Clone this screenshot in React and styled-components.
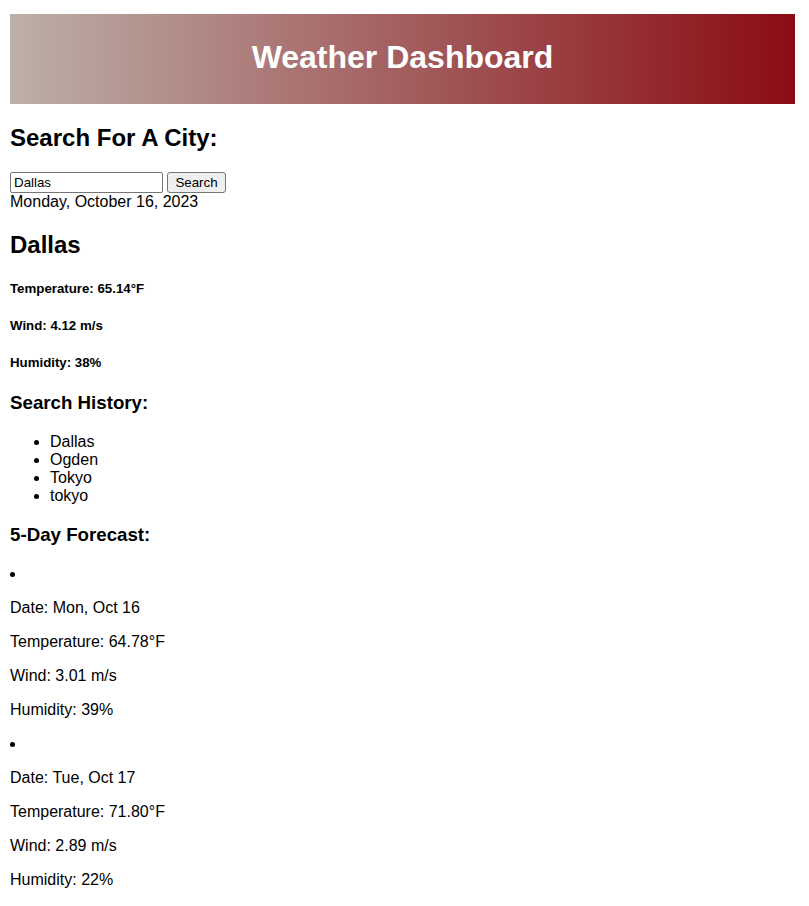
import React from "react";
import styled, { createGlobalStyle } from "styled-components";

const GlobalStyle = createGlobalStyle`
  body {
    margin: 14px 14px 0 10px;
    font-family: "Liberation Sans", Arial, sans-serif;
    font-size: 16px;
    color: #000;
    background: #fff;
  }
`;

const Header = styled.header`
  height: 90px;
  box-sizing: border-box;
  padding-bottom: 4px;
  display: flex;
  align-items: center;
  justify-content: center;
  background: linear-gradient(to right, #bcb0a9, #8a0c14);
`;

const Title = styled.h1`
  margin: 0;
  color: #fff;
  font-size: 32px;
  font-weight: 700;
`;

const SectionTitle = styled.h2`
  font-size: 24px;
  font-weight: 700;
  margin: 19.92px 0;
`;

const SearchRow = styled.div`
  display: flex;
  align-items: center;
  gap: 4px;
`;

const CityInput = styled.input`
  box-sizing: border-box;
  width: 153px;
  height: 21px;
  padding: 1px 3px;
  font-family: "Liberation Sans", Arial, sans-serif;
  font-size: 13.33px;
  border: 1px solid #767676;
  border-radius: 2px;
  outline: none;
`;

const SearchButton = styled.button`
  box-sizing: border-box;
  width: 59px;
  height: 21px;
  padding: 1px 6px;
  font-family: "Liberation Sans", Arial, sans-serif;
  font-size: 13.33px;
  background: #efefef;
  border: 1px solid #767676;
  border-radius: 3px;
  color: #000;
`;

const DateText = styled.div`
  line-height: 18px;
`;

const Stat = styled.h5`
  font-size: 13.28px;
  font-weight: 700;
  margin: 22.18px 0;
`;

const SubTitle = styled.h3`
  font-size: 18.72px;
  font-weight: 700;
  margin: 18.72px 0;
`;

const HistoryList = styled.ul`
  margin: 16px 0;
  padding-left: 40px;
  line-height: 18px;
`;

const ForecastList = styled.ul`
  margin: 0;
  padding: 0;
`;

const ForecastItem = styled.li`
  list-style: disc inside;
  line-height: 18px;
`;

const ForecastLine = styled.p`
  margin: 16px 0;
  line-height: 18px;
`;

const history = ["Dallas", "Ogden", "Tokyo", "tokyo"];

const forecast = [
  { date: "Mon, Oct 16", temp: "64.78", wind: "3.01", humidity: "39" },
  { date: "Tue, Oct 17", temp: "71.80", wind: "2.89", humidity: "22" },
];

const App = () => {
  const [city, setCity] = React.useState("Dallas");

  return (
    <>
      <GlobalStyle />
      <Header>
        <Title>Weather Dashboard</Title>
      </Header>
      <SectionTitle>Search For A City:</SectionTitle>
      <SearchRow>
        <CityInput value={city} onChange={(e) => setCity(e.target.value)} />
        <SearchButton>Search</SearchButton>
      </SearchRow>
      <DateText>Monday, October 16, 2023</DateText>
      <SectionTitle>Dallas</SectionTitle>
      <Stat>Temperature: 65.14°F</Stat>
      <Stat>Wind: 4.12 m/s</Stat>
      <Stat>Humidity: 38%</Stat>
      <SubTitle>Search History:</SubTitle>
      <HistoryList>
        {history.map((item, idx) => (
          <li key={idx}>{item}</li>
        ))}
      </HistoryList>
      <SubTitle>5-Day Forecast:</SubTitle>
      <ForecastList>
        {forecast.map((day, idx) => (
          <ForecastItem key={idx}>
            <ForecastLine>Date: {day.date}</ForecastLine>
            <ForecastLine>Temperature: {day.temp}°F</ForecastLine>
            <ForecastLine>Wind: {day.wind} m/s</ForecastLine>
            <ForecastLine>Humidity: {day.humidity}%</ForecastLine>
          </ForecastItem>
        ))}
      </ForecastList>
    </>
  );
};

export default App;
